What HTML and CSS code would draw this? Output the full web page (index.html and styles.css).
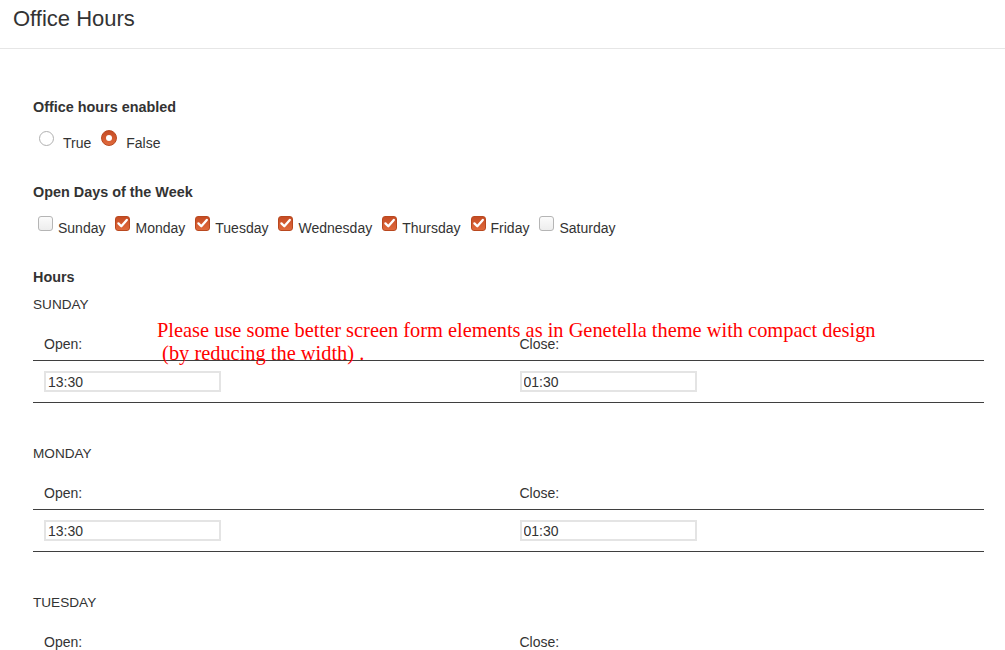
FILE: index.html
```html
<!DOCTYPE html>
<html lang="en">
<head>
<meta charset="utf-8">
<title>Office Hours</title>
<link rel="stylesheet" href="styles.css">
</head>
<body>
<header class="page-head">
  <h1 class="page-title">Office Hours</h1>
</header>
<main class="content">
  <section class="field">
    <div class="field-label">Office hours enabled</div>
    <div class="choices radios">
      <label class="choice"><span class="radio"></span>True</label>
      <label class="choice"><span class="radio is-checked"></span>False</label>
    </div>
  </section>

  <section class="field">
    <div class="field-label">Open Days of the Week</div>
    <div class="choices checks">
      <label class="choice"><span class="check"></span>Sunday</label>
      <label class="choice"><span class="check is-checked"><svg viewBox="0 0 15 15" class="tick"><path d="M3.4 7.4 L6.3 10.3 L11.8 3.9"/></svg></span>Monday</label>
      <label class="choice"><span class="check is-checked"><svg viewBox="0 0 15 15" class="tick"><path d="M3.4 7.4 L6.3 10.3 L11.8 3.9"/></svg></span>Tuesday</label>
      <label class="choice"><span class="check is-checked"><svg viewBox="0 0 15 15" class="tick"><path d="M3.4 7.4 L6.3 10.3 L11.8 3.9"/></svg></span>Wednesday</label>
      <label class="choice"><span class="check is-checked"><svg viewBox="0 0 15 15" class="tick"><path d="M3.4 7.4 L6.3 10.3 L11.8 3.9"/></svg></span>Thursday</label>
      <label class="choice"><span class="check is-checked"><svg viewBox="0 0 15 15" class="tick"><path d="M3.4 7.4 L6.3 10.3 L11.8 3.9"/></svg></span>Friday</label>
      <label class="choice"><span class="check"></span>Saturday</label>
    </div>
  </section>

  <section class="hours">
    <div class="field-label hours-label">Hours</div>

    <div class="day">
      <div class="day-name">SUNDAY</div>
      <table class="hours-table">
        <tr class="head-row"><td>Open:</td><td>Close:</td></tr>
        <tr class="input-row"><td><input class="time-input" type="text" value="13:30"></td><td><input class="time-input" type="text" value="01:30"></td></tr>
      </table>
    </div>

    <div class="day">
      <div class="day-name">MONDAY</div>
      <table class="hours-table">
        <tr class="head-row"><td>Open:</td><td>Close:</td></tr>
        <tr class="input-row"><td><input class="time-input" type="text" value="13:30"></td><td><input class="time-input" type="text" value="01:30"></td></tr>
      </table>
    </div>

    <div class="day">
      <div class="day-name">TUESDAY</div>
      <table class="hours-table">
        <tr class="head-row"><td>Open:</td><td>Close:</td></tr>
        <tr class="input-row"><td><input class="time-input" type="text" value="13:30"></td><td><input class="time-input" type="text" value="01:30"></td></tr>
      </table>
    </div>
  </section>

  <p class="annotation">Please use some better screen form elements as in Genetella theme with compact design
 (by reducing the width) .</p>
</main>
</body>
</html>
```

FILE: styles.css
```css
html, body {
  margin: 0;
  padding: 0;
  background: #ffffff;
}

body {
  font-family: "Liberation Sans", Arial, sans-serif;
  font-size: 14px;
  color: #333333;
  overflow: hidden;
}

.page-head {
  padding: 6px 13px 16px;
  border-bottom: 1px solid #e6e6e6;
}

.page-title {
  margin: 0;
  font-size: 22px;
  line-height: 26px;
  font-weight: normal;
  color: #333333;
}

.content {
  position: relative;
  padding: 48px 21px 0 33px;
}

.field {
  margin-bottom: 29px;
}

.field-label {
  font-size: 14.4px;
  font-weight: bold;
  line-height: 20px;
  margin-bottom: 16px;
  color: #333333;
}

.choices {
  display: flex;
  align-items: baseline;
  line-height: 20px;
  font-size: 14px;
}

.radios {
  gap: 4px;
}

.checks {
  gap: 5px;
}

.choice {
  display: block;
  white-space: nowrap;
}

.radio,
.check {
  display: inline-block;
  box-sizing: border-box;
  width: 15px;
  height: 15px;
  vertical-align: 2px;
  margin-top: -4px;
}

.radio {
  border-radius: 50%;
  border: 1px solid #b0b0b0;
  background: #ffffff;
  margin-left: 6px;
  margin-right: 9px;
  position: relative;
}

.radio.is-checked {
  width: 16px;
  height: 16px;
  border: 1px solid #b9481f;
  background: linear-gradient(#c64c24, #e06a3c);
}

.radio.is-checked::after {
  content: "";
  position: absolute;
  left: 4px;
  top: 4px;
  width: 6px;
  height: 6px;
  border-radius: 50%;
  background: #ffffff;
}

.check {
  border-radius: 3px;
  border: 1px solid #b5b5b5;
  background: linear-gradient(#fbfbfb, #ededed);
  margin-left: 5px;
  margin-right: 5px;
  position: relative;
}

.check.is-checked {
  border: 1px solid #b9481f;
  background: linear-gradient(#c64c24, #e06a3c);
}

.tick {
  position: absolute;
  left: -1px;
  top: -1px;
  width: 15px;
  height: 15px;
}

.tick path {
  fill: none;
  stroke: #ffffff;
  stroke-width: 2.3;
  stroke-linecap: round;
  stroke-linejoin: round;
}

.hours-label {
  margin-bottom: 9px;
}

.day {
  margin-bottom: 42px;
}

.day-name {
  font-size: 13.6px;
  line-height: 18px;
  margin-bottom: 11px;
  color: #333333;
}

.hours-table {
  width: 100%;
  border-collapse: collapse;
  table-layout: fixed;
}

.hours-table td {
  width: 50%;
  padding: 0 11px;
  text-align: left;
  vertical-align: top;
}

.head-row td {
  padding-top: 9px;
  padding-bottom: 6px;
  line-height: 20px;
  font-size: 14px;
  border-bottom: 1px solid #3f3f3f;
}

.input-row td {
  padding-top: 10px;
  padding-bottom: 10px;
  line-height: 0;
  border-bottom: 1px solid #3f3f3f;
}

.time-input {
  box-sizing: border-box;
  width: 177px;
  height: 21px;
  margin: 0;
  padding: 0 2px;
  border: 2px solid #e4e4e4;
  border-radius: 0;
  font-family: "Liberation Sans", Arial, sans-serif;
  font-size: 14px;
  line-height: 17px;
  color: #333333;
  background: #ffffff;
  outline: none;
}

.annotation {
  position: absolute;
  left: 157px;
  top: 270px;
  margin: 0;
  white-space: pre;
  font-family: "Liberation Serif", "Times New Roman", serif;
  font-size: 20.4px;
  line-height: 23px;
  color: #ff0000;
}
```
